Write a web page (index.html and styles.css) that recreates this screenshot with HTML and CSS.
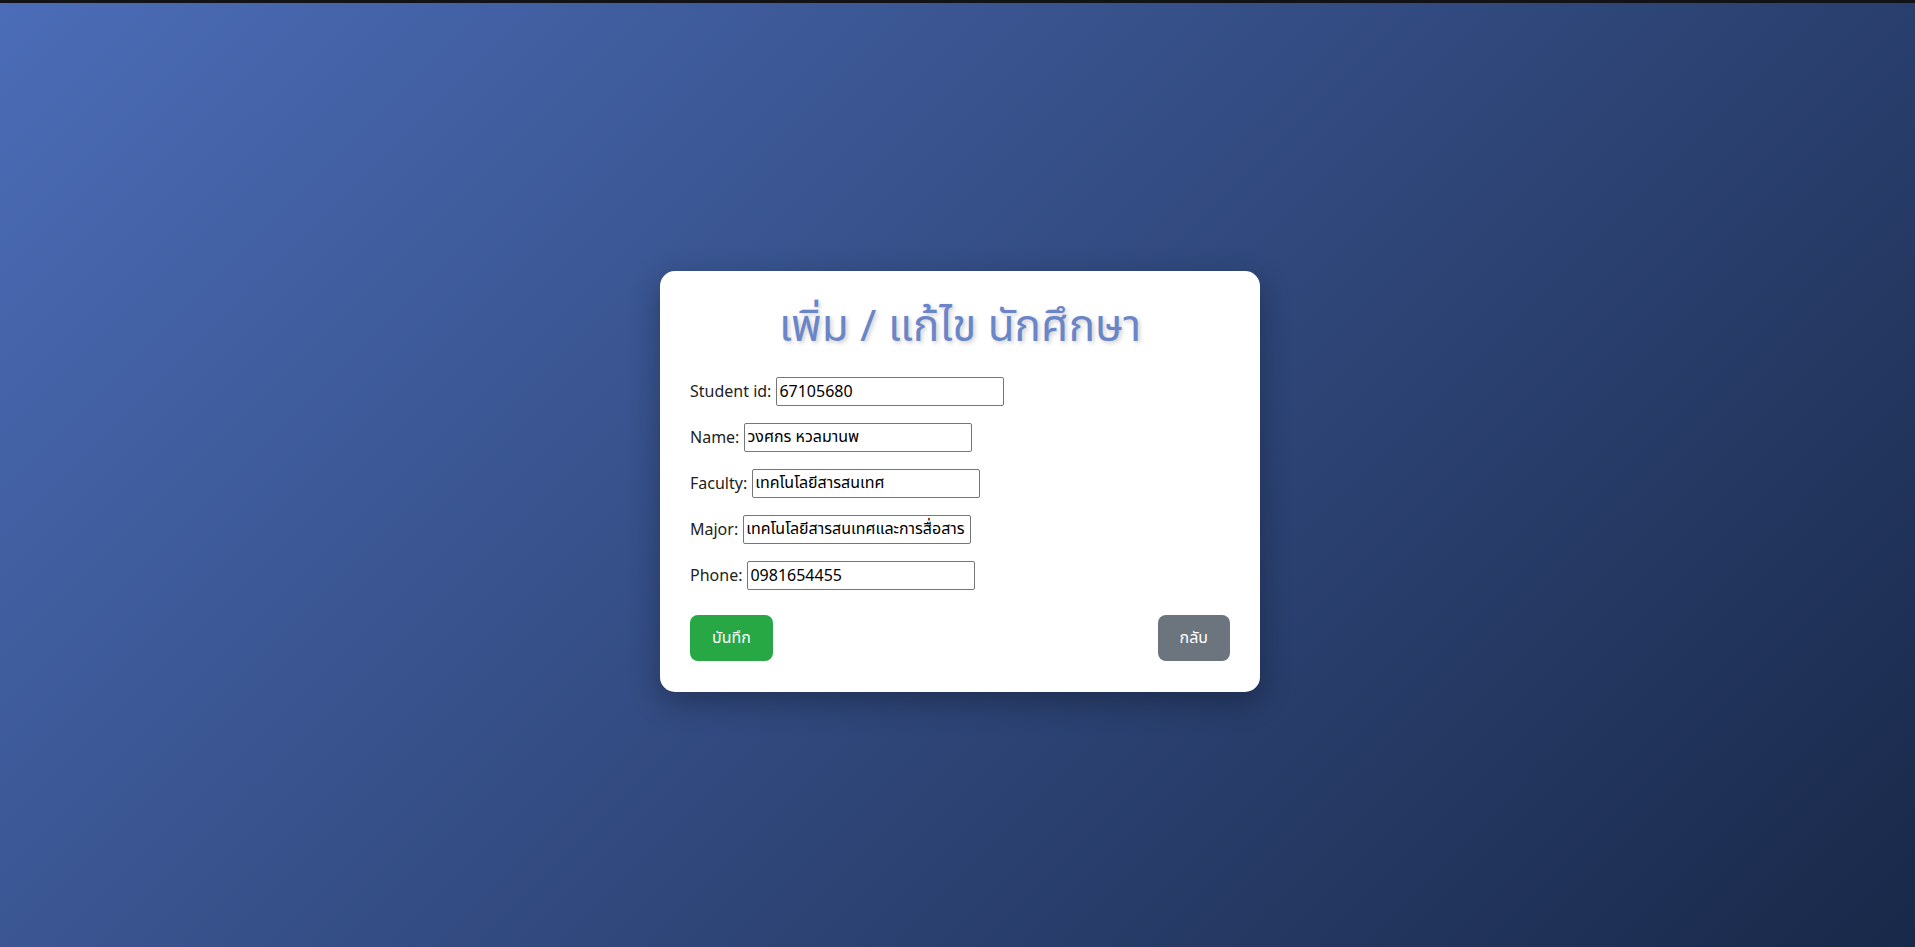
FILE: index.html
```html
<!DOCTYPE html>
<html lang="th">
<head>
<meta charset="utf-8">
<title>เพิ่ม / แก้ไข นักศึกษา</title>
<link rel="stylesheet" href="styles.css">
</head>
<body>
<main class="card">
  <h1 class="title">เพิ่ม / แก้ไข นักศึกษา</h1>
  <form class="form">
    <div class="row"><label class="label" for="sid">Student id:</label><input class="field" id="sid" type="text" value="67105680"></div>
    <div class="row"><label class="label" for="name">Name:</label><input class="field" id="name" type="text" value="วงศกร หวลมานพ"></div>
    <div class="row"><label class="label" for="fac">Faculty:</label><input class="field" id="fac" type="text" value="เทคโนโลยีสารสนเทศ"></div>
    <div class="row"><label class="label" for="major">Major:</label><input class="field" id="major" type="text" value="เทคโนโลยีสารสนเทศและการสื่อสาร"></div>
    <div class="row"><label class="label" for="phone">Phone:</label><input class="field" id="phone" type="text" value="0981654455"></div>
    <div class="actions">
      <button class="btn btn-save" type="button">บันทึก</button>
      <button class="btn btn-back" type="button">กลับ</button>
    </div>
  </form>
</main>
</body>
</html>
```

FILE: styles.css
```css
* { box-sizing: border-box; }

html, body { height: 100%; }

body {
  margin: 0;
  border-top: 3px solid #121316;
  background: linear-gradient(135deg, #4b6cb7 0%, #182848 100%);
  font-family: "Noto Sans", "Noto Sans Thai", "Noto Sans Thai Looped", sans-serif;
  font-size: 16px;
  color: #222;
  display: flex;
  align-items: center;
  justify-content: center;
  padding: 12px 0 0 5px;
}

.card {
  width: 600px;
  background: #fff;
  border-radius: 15px;
  padding: 30px 30px 31px;
  box-shadow: 0 10px 30px rgba(0, 0, 0, 0.3);
}

.title {
  margin: 0;
  height: 50px;
  line-height: 46px;
  text-align: center;
  font-size: 44px;
  font-weight: 400;
  color: #6b86c8;
  text-shadow: 2px 2px 4px rgba(0, 0, 0, 0.2);
}

.form {
  margin-top: 26px;
  display: flex;
  flex-direction: column;
  gap: 17px;
}

.row {
  display: flex;
  align-items: center;
  gap: 5px;
  height: 29px;
}

.label {
  color: #222;
  font-size: 16px;
}

.field {
  width: 228px;
  height: 29px;
  padding: 1px 2px;
  border: 1px solid #767676;
  border-radius: 2px;
  font-family: inherit;
  font-size: 16px;
  color: #000;
  background: #fff;
}

.actions {
  display: flex;
  justify-content: space-between;
  margin-top: 8px;
}

.btn {
  height: 46px;
  padding: 0 22px;
  border: none;
  border-radius: 8px;
  color: #fff;
  font-family: inherit;
  font-size: 16px;
  font-weight: 400;
  cursor: pointer;
}

.btn-save { background: #28a745; }
.btn-back { background: #6c757d; }
```
